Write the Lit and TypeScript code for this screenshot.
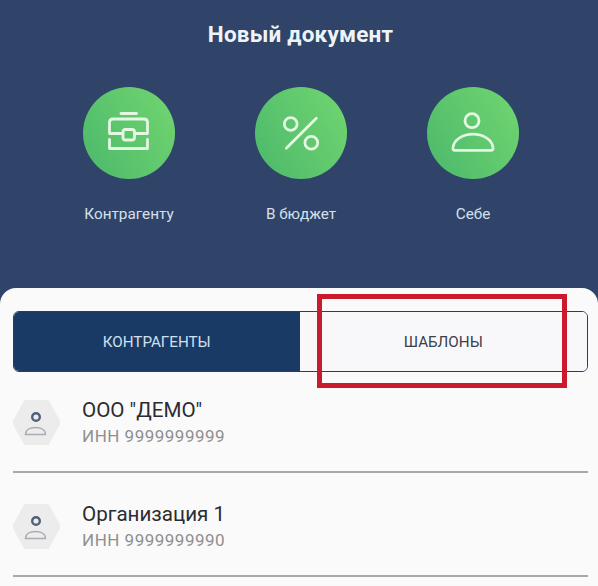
import { LitElement, html, css, svg } from "lit";
import { customElement } from "lit/decorators.js";

const brief = svg`<g fill="none" stroke="#e4f7e2" stroke-width="2.8" stroke-linecap="round" stroke-linejoin="round">
  <path d="M-8 -19.5H7.5"/>
  <path d="M-6 0.5H-19.5V-10.5Q-19.5 -14 -16 -14H15Q18.5 -14 18.5 -10.5V0.5H6"/>
  <path d="M-19.5 6.5V15.5H18.5V6.5"/>
  <rect x="-6" y="-3.5" width="11.5" height="10.5" rx="2.5"/>
</g>`;
const percent = svg`<g fill="none" stroke="#e4f7e2" stroke-width="2.8" stroke-linecap="round">
  <path d="M15.3 -14.7L-14.7 15.3"/>
  <circle cx="-10.3" cy="-9" r="6.4"/>
  <circle cx="10.3" cy="9.7" r="6.4"/>
</g>`;
const person = svg`<g fill="none" stroke="#e4f7e2" stroke-width="2.8" stroke-linejoin="round">
  <circle cx="-1" cy="-12.3" r="7"/>
  <path d="M-18 17.4Q-20.5 17.4 -20 14.5C-19 6 -9 1.2 0 1.2C9 1.2 19 6 20 14.5Q20.5 17.4 18 17.4Z"/>
</g>`;

@customElement("app-root")
export class AppRoot extends LitElement {
  static styles = css`
    :host { display: block; width: 598px; height: 586px; overflow: hidden; position: relative; background: #2f4468;
      font-family: Roboto, "Liberation Sans", sans-serif; }
    .head { height: 288px; box-sizing: border-box; padding-top: 20px; display: flex; flex-direction: column; align-items: center; }
    h1 { margin: 0 0 0 3px; font-size: 22.5px; line-height: 28px; font-weight: 700; color: #eef3f7; letter-spacing: .2px; }
    .actions { display: flex; gap: 80px; margin-top: 39px; margin-left: 4px; }
    .action { width: 92px; display: flex; flex-direction: column; align-items: center; }
    .circle { width: 92px; height: 92px; border-radius: 50%; background: linear-gradient(60deg, #4bb86c 0%, #72d66f 100%); display: block; }
    .label { margin-top: 25px; font-size: 15.3px; line-height: 20px; color: #d5e0ec; white-space: nowrap; }
    .sheet { height: 298px; box-sizing: border-box; background: #fafafa; border-radius: 16px 16px 0 0; padding: 23px 10px 0 13px; }
    .tabs { display: flex; height: 61px; margin-bottom: -3px; border-radius: 6px; box-sizing: border-box; overflow: hidden; border: 1.5px solid #2b3d5c; }
    .tab { display: flex; align-items: center; justify-content: center; padding-top: 1px; box-sizing: border-box; font-size: 15.2px; color: #3b3f4c; background: #f8f8fa; }
    .tab.on { width: 285.5px; background: #1a3a66; color: #cfe0ee; flex: none; }
    .tab.off { flex: 1; }
    .row { display: flex; align-items: center; height: 104px; padding-top: 5px; border-bottom: 2px solid #a9a9a9; box-sizing: border-box; gap: 22px; }
    .hex { width: 47px; height: 47px; flex: none; display: block; }
    .name { font-size: 20.6px; line-height: 26px; color: #2a2c30; }
    .inn { font-size: 17px; line-height: 26px; color: #8f8f8f; letter-spacing: .5px; }
    .mark { position: absolute; left: 317px; top: 294px; width: 250px; height: 94px; box-sizing: border-box; border: 5px solid #cb1a2b; }
  `;

  private avatar() {
    return html`<svg class="hex" viewBox="0 0 47 47">
      <path d="M12 2H35L47 23.5L35 45H12L0 23.5Z" fill="#ececed" stroke="#ececed" stroke-width="2" stroke-linejoin="round"/>
      <circle cx="23" cy="18" r="3.8" fill="none" stroke="#4f5d78" stroke-width="2.4"/>
      <path d="M12.5 35.5C12.5 30.5 17.5 28.5 22.5 28.5C27.5 28.5 32.5 30.5 32.5 35.5Z" fill="none" stroke="#a9adb3" stroke-width="1.5" stroke-linejoin="round"/>
    </svg>`;
  }

  private row(name: string, inn: string) {
    return html`<div class="row">${this.avatar()}<div><div class="name">${name}</div><div class="inn">${inn}</div></div></div>`;
  }

  private action(icon: unknown, label: string) {
    return html`<div class="action">
      <svg class="circle" viewBox="-46 -46 92 92">${icon}</svg>
      <div class="label">${label}</div>
    </div>`;
  }

  render() {
    return html`
      <div class="head">
        <h1>Новый документ</h1>
        <div class="actions">
          ${this.action(brief, "Контрагенту")}
          ${this.action(percent, "В бюджет")}
          ${this.action(person, "Себе")}
        </div>
      </div>
      <div class="sheet">
        <div class="tabs">
          <div class="tab on">КОНТРАГЕНТЫ</div>
          <div class="tab off">ШАБЛОНЫ</div>
        </div>
        ${this.row('ООО "ДЕМО"', "ИНН 9999999999")}
        ${this.row("Организация 1", "ИНН 9999999990")}
      </div>
      <div class="mark"></div>
    `;
  }
}
